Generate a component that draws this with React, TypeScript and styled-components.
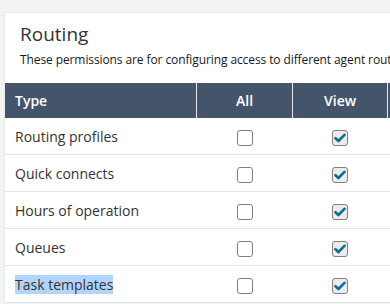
import React from 'react';
import styled, {createGlobalStyle} from 'styled-components';

const GlobalStyle = createGlobalStyle`
  html, body {
    margin: 0;
    padding: 0;
    background: #f2f3f3;
    font-family: "Open Sans", "Liberation Sans", sans-serif;
    overflow: hidden;
  }
`;

type Row = {label: string; all: boolean; view: boolean; selected?: boolean};

const rows: Row[] = [
  {label: 'Routing profiles', all: false, view: true},
  {label: 'Quick connects', all: false, view: true},
  {label: 'Hours of operation', all: false, view: true},
  {label: 'Queues', all: false, view: true},
  {label: 'Task templates', all: false, view: true, selected: true},
];

const Checkbox: React.FC<{checked: boolean}> = ({checked}) => (
  <Box $checked={checked}>
    {checked && (
      <svg width="12" height="10" viewBox="0 0 12 10">
        <path
          d="M1.5 5.2 L4.4 8 L10.5 1.8"
          fill="none"
          stroke="#0f6d94"
          strokeWidth="2.6"
          strokeLinecap="round"
          strokeLinejoin="round"
        />
      </svg>
    )}
  </Box>
);

const App: React.FC = () => {
  return (
    <>
      <GlobalStyle />
      <Page>
        <Card>
          <Heading>
            <Title>Routing</Title>
            <Description>
              These permissions are for configuring access to different agent routing resources.
            </Description>
          </Heading>
          <Table>
            <thead>
              <tr>
                <HeadCell $align="left">Type</HeadCell>
                <HeadCell>All</HeadCell>
                <HeadCell>View</HeadCell>
                <HeadCell>Edit</HeadCell>
              </tr>
            </thead>
            <tbody>
              {rows.map((r) => (
                <tr key={r.label}>
                  <Cell $align="left">
                    <Label $selected={r.selected}>{r.label}</Label>
                  </Cell>
                  <Cell>
                    <Checkbox checked={r.all} />
                  </Cell>
                  <Cell>
                    <Checkbox checked={r.view} />
                  </Cell>
                  <Cell>
                    <Checkbox checked={false} />
                  </Cell>
                </tr>
              ))}
            </tbody>
          </Table>
        </Card>
      </Page>
    </>
  );
};

const Page = styled.div`
  padding: 13px 0 0 5px;
  width: 600px;
`;

const Card = styled.section`
  background: #ffffff;
  box-shadow: 0 0 1px rgba(0, 28, 36, 0.25);
`;

const Heading = styled.header`
  padding: 9px 15px 15px 15px;
`;

const Title = styled.h2`
  margin: 0;
  font-size: 19px;
  font-weight: 400;
  line-height: 24px;
  color: #333;
`;

const Description = styled.p`
  margin: 6px 0 0;
  font-size: 12px;
  line-height: 16px;
  letter-spacing: -0.1px;
  color: #16191f;
  white-space: nowrap;
`;

const Table = styled.table`
  border-collapse: collapse;
  table-layout: fixed;
  width: 478px;
`;

const HeadCell = styled.th<{$align?: string}>`
  height: 35px;
  padding: 0 10px;
  background: #44556b;
  color: #ffffff;
  font-size: 14px;
  font-weight: 600;
  text-align: ${(p) => p.$align || 'center'};
  border-left: 1px solid #e6e9ee;
  &:first-child {
    width: 170px;
    border-left: none;
  }
  &:not(:first-child) {
    width: 74px;
  }
`;

const Cell = styled.td<{$align?: string}>`
  height: 36px;
  padding: 0 10px;
  font-size: 14px;
  color: #333;
  text-align: ${(p) => p.$align || 'center'};
  border-bottom: 1px solid #e4e6e6;
  vertical-align: middle;
`;

const Label = styled.span<{$selected?: boolean}>`
  background: ${(p) => (p.$selected ? '#b3d4fc' : 'transparent')};
  line-height: 18px;
`;

const Box = styled.span<{$checked: boolean}>`
  display: inline-flex;
  align-items: center;
  justify-content: center;
  box-sizing: border-box;
  width: 16px;
  height: 16px;
  border: 1px solid #7f7f7f;
  border-radius: 3px;
  background: ${(p) => (p.$checked ? '#ececec' : '#ffffff')};
  vertical-align: middle;
`;

export default App;
